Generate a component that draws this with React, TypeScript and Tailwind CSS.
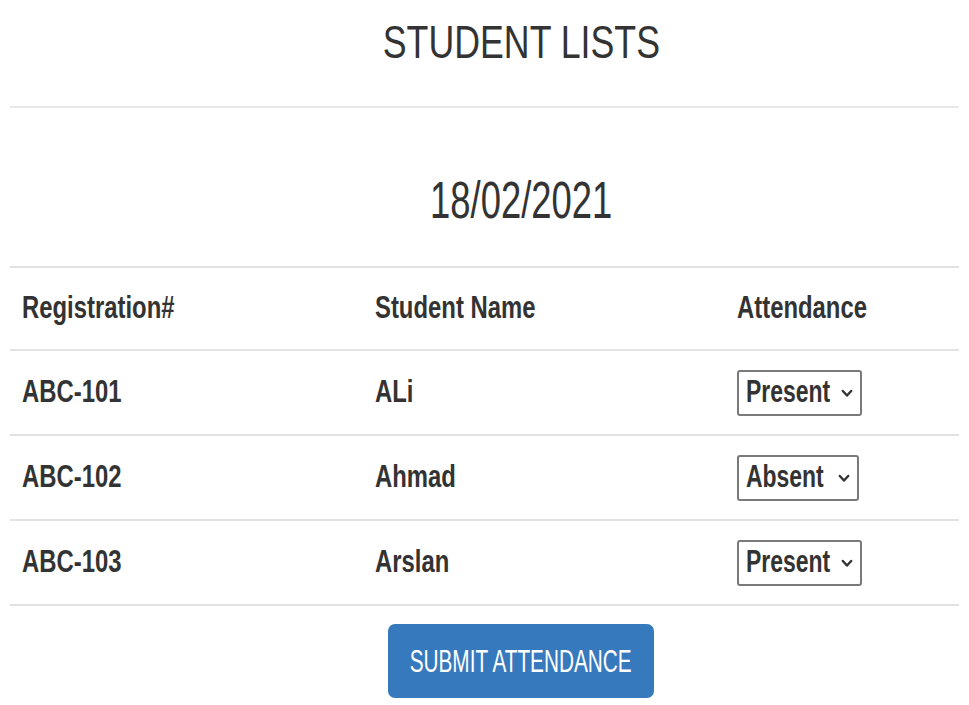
const rows = [
  { reg: "ABC-101", name: "ALi", status: "Present" },
  { reg: "ABC-102", name: "Ahmad", status: "Absent" },
  { reg: "ABC-103", name: "Arslan", status: "Present" },
];

function Cell({ children }: { children: React.ReactNode }) {
  return (
    <div className="px-3">
      <span className="inline-block origin-left scale-x-[0.77] whitespace-nowrap">
        {children}
      </span>
    </div>
  );
}

// Fake native select: box + text + small chevron.
function StatusSelect({ value }: { value: string }) {
  const absent = value === "Absent";
  return (
    <div
      className={`flex h-[46px] items-center rounded-[3px] border-2 border-[#7a7a7a] pl-[7px] ${
        absent ? "w-[122px]" : "w-[125px]"
      }`}
    >
      <div className={`shrink-0 ${absent ? "w-[87px]" : "w-[90px]"}`}>
        <span className="inline-block origin-left scale-x-[0.74] whitespace-nowrap leading-none">
          {value}
        </span>
      </div>
      <svg
        viewBox="0 0 12 9"
        className="ml-[5px] mt-[2px] h-[9px] w-[12px] shrink-0"
      >
        <polyline
          points="1.8,2 6,6.5 10.2,2"
          fill="none"
          stroke="#333"
          strokeWidth="2.4"
          strokeLinecap="round"
          strokeLinejoin="round"
        />
      </svg>
    </div>
  );
}

export default function App() {
  return (
    <div className="min-h-[705px] w-[969px] bg-white font-['Liberation_Sans',Arial,sans-serif] text-[#333]">
      <div className="pl-[73px] pt-[18px] text-center">
        <h1 className="text-[47px] leading-none font-normal">
          <span className="inline-block scale-x-[0.76] whitespace-nowrap">STUDENT LISTS</span>
        </h1>
      </div>
      <div className="mx-[10px] mt-[41px] h-[2px] bg-[#e8e8e8]" />

      <div className="mt-[66px] pl-[73px] text-center">
        <h2 className="text-[52px] leading-none font-normal">
          <span className="inline-block scale-x-[0.7] whitespace-nowrap">18/02/2021</span>
        </h2>
      </div>

      <div className="mx-[10px] mt-[40px] border-t-2 border-[#e2e2e2] text-[31px] font-bold">
        <div className="grid h-[83px] grid-cols-[353px_362px_1fr] items-center border-b-2 border-[#e2e2e2]">
          <Cell>Registration#</Cell>
          <Cell>Student Name</Cell>
          <Cell>Attendance</Cell>
        </div>
        {rows.map((r) => (
          <div
            key={r.reg}
            className="grid h-[85px] grid-cols-[353px_362px_1fr] items-center border-b-2 border-[#e2e2e2]"
          >
            <Cell>{r.reg}</Cell>
            <Cell>{r.name}</Cell>
            <div className="px-3">
              <StatusSelect value={r.status} />
            </div>
          </div>
        ))}
      </div>

      <div className="mt-[18px] flex justify-center pl-[73px]">
        <button className="flex h-[74px] w-[266px] items-center justify-center rounded-[7px] bg-[#3779bd] text-[31px] text-white">
          <span className="inline-block scale-x-[0.67] whitespace-nowrap leading-none">
            SUBMIT ATTENDANCE
          </span>
        </button>
      </div>
    </div>
  );
}
